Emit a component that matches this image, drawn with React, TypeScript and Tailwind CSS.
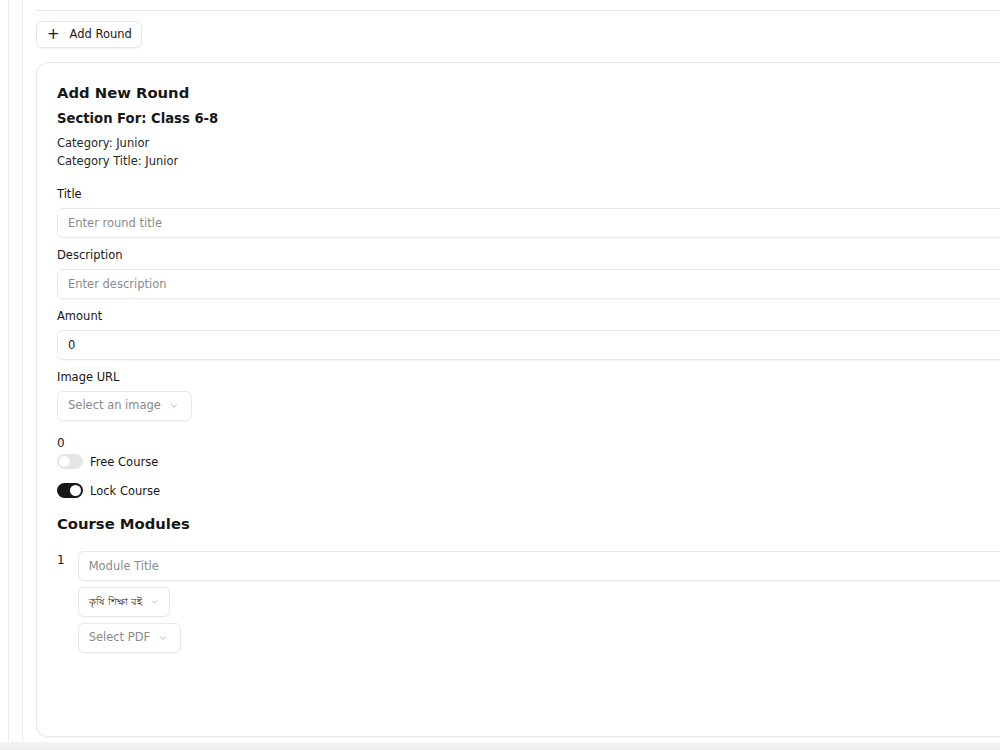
import { useState } from "react";

type FieldProps = {
  label: string;
  placeholder?: string;
  value?: string;
};

function Chevron() {
  return (
    <svg width="10" height="10" viewBox="0 0 24 24" fill="none" stroke="#a3a3a3" strokeWidth="2" strokeLinecap="round" strokeLinejoin="round">
      <path d="m6 9 6 6 6-6" />
    </svg>
  );
}

function Field({ label, placeholder, value }: FieldProps) {
  return (
    <div className="flex flex-col">
      <label className="text-[11.5px] leading-4 text-neutral-900">{label}</label>
      <input
        className="mt-[6px] h-[30px] w-full rounded-md border border-[#e8e8e8] px-[10px] text-[11.5px] text-neutral-900 placeholder:text-[#8a8a8a] shadow-[0_1px_1px_rgba(0,0,0,0.03)] outline-none"
        placeholder={placeholder}
        defaultValue={value}
      />
    </div>
  );
}

function SelectButton({ text, width, small }: { text: string; width: string; small?: boolean }) {
  return (
    <button
      className={`flex h-[30px] ${width} items-center gap-[8px] whitespace-nowrap rounded-md border border-[#e8e8e8] px-[10px] shadow-[0_1px_1px_rgba(0,0,0,0.03)]`}
    >
      <span className={small ? "text-[9.5px] text-neutral-800" : "text-[11.5px] text-[#8a8a8a]"}>{text}</span>
      <Chevron />
    </button>
  );
}

function Toggle({ on, label }: { on: boolean; label: string }) {
  const [checked, setChecked] = useState(on);
  return (
    <label className="flex h-[15px] items-center gap-[7px]">
      <button
        onClick={() => setChecked(!checked)}
        className={
          checked
            ? "flex h-[15px] w-[26px] items-center justify-end rounded-full bg-[#171717] p-[2px]"
            : "flex h-[15px] w-[26px] items-center justify-start rounded-full bg-[#e5e5e5] p-[2px]"
        }
      >
        <span className="h-[11px] w-[11px] rounded-full bg-white" />
      </button>
      <span className="text-[11.5px] leading-4 text-neutral-900">{label}</span>
    </label>
  );
}

export default function App() {
  return (
    <div className="h-[750px] w-[1000px] overflow-hidden bg-white font-['DejaVu_Sans','Noto_Sans',sans-serif]">
      <div className="relative flex h-full pl-2">
        <div className="h-full border-l border-[#ededed] pl-[13px]">
          <div className="h-full w-[1100px] border-l border-[#ededed] pl-[13px]">
            <div className="h-[11px] border-b border-[#e8e8e8]" />

            <button className="mt-[10px] flex h-[27px] items-center gap-[10px] rounded-md border border-[#e5e5e5] pl-[10px] pr-[9px] text-[11.5px] text-neutral-900 shadow-[0_1px_1px_rgba(0,0,0,0.03)]">
              <span className="text-[15px] leading-none">+</span>
              Add Round
            </button>

            <div className="mt-[14px] h-[675px] rounded-xl border border-[#e8e8e8] px-5 pt-5 shadow-[0_1px_2px_rgba(0,0,0,0.04)]">
              <h2 className="text-[14.8px] font-bold leading-5 text-neutral-900">Add New Round</h2>
              <h3 className="mt-[7px] text-[13.2px] font-bold leading-[18px] text-neutral-900">Section For: Class 6-8</h3>
              <p className="mt-[6px] text-[11.5px] leading-[18px] text-neutral-800">Category: Junior</p>
              <p className="text-[11.5px] leading-[18px] text-neutral-800">Category Title: Junior</p>

              <div className="mt-[16px] flex flex-col gap-[9px]">
                <Field label="Title" placeholder="Enter round title" />
                <Field label="Description" placeholder="Enter description" />
                <Field label="Amount" value="0" />
                <div className="flex flex-col">
                  <label className="text-[11.5px] leading-4 text-neutral-900">Image URL</label>
                  <div className="mt-[6px]">
                    <SelectButton text="Select an image" width="w-[135px]" />
                  </div>
                </div>
              </div>

              <p className="mt-[14px] text-[12px] leading-4 text-neutral-900">0</p>
              <div className="mt-[3px] flex flex-col gap-[14px]">
                <Toggle on={false} label="Free Course" />
                <Toggle on={true} label="Lock Course" />
              </div>

              <h3 className="mt-[16px] text-[14.8px] font-bold leading-5 text-neutral-900">Course Modules</h3>

              <div className="mt-[17px] flex gap-[13px]">
                <span className="pt-[1px] text-[12px] leading-4 text-neutral-900">1</span>
                <div className="flex flex-1 flex-col gap-[6px]">
                  <input
                    className="h-[30px] w-full rounded-md border border-[#e8e8e8] px-[10px] text-[11.5px] placeholder:text-[#8a8a8a] shadow-[0_1px_1px_rgba(0,0,0,0.03)] outline-none"
                    placeholder="Module Title"
                  />
                  <div>
                    <SelectButton text="কৃষি শিক্ষা বই" width="w-[92px]" small />
                  </div>
                  <div>
                    <SelectButton text="Select PDF" width="w-[103px]" />
                  </div>
                </div>
              </div>
            </div>
          </div>
        </div>
        <div className="absolute bottom-0 left-0 h-[8px] w-full bg-gradient-to-b from-[#f3f3f3] to-[#ececec]" />
      </div>
    </div>
  );
}
